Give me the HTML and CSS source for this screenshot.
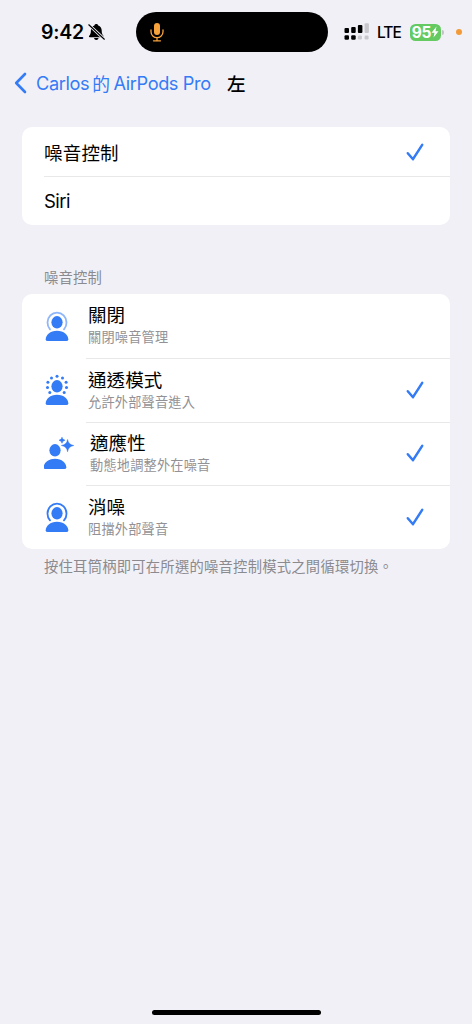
FILE: index.html
```html
<!DOCTYPE html>
<html lang="zh-Hant">
<head>
<meta charset="utf-8">
<meta name="viewport" content="width=device-width, initial-scale=1">
<title>左</title>
<link rel="stylesheet" href="styles.css">
</head>
<body>
<svg class="defs" width="0" height="0" aria-hidden="true">
  <symbol id="check" viewBox="0 0 18 18"><path d="M1.8 10.2 7 16.200 16.200 1.800" fill="none" stroke="currentColor" stroke-width="2.500" stroke-linecap="round" stroke-linejoin="round"/></symbol>
  <symbol id="person" viewBox="0 0 30 34">
    <ellipse cx="13" cy="14.3" rx="5.600" ry="6.200"/>
    <path d="M1.700 31.200C1.700 27 6.200 22.700 13 22.700s11.300 4.300 11.300 8.500q0 1.900-2 1.900H3.700q-2 0-2-1.900Z"/>
  </symbol>
  <symbol id="arc" viewBox="0 0 30 34"><path d="M6 21.400A9.500 10 0 1 1 20 21.400" fill="none" stroke="currentColor" stroke-width="1.800" stroke-linecap="round"/></symbol>
</svg>
<header class="status">
  <div class="time">9:42</div>
  <svg class="bell" viewBox="0 0 17 18"><path d="M8.300 1c1 0 1.700.6 1.900 1.400 2.400.8 3.500 2.600 3.500 5.200 0 3 .7 4.200 1.700 5.200.5.600.3 1.400-.6 1.400H1.800c-.9 0-1.100-.8-.6-1.400 1-1 1.700-2.200 1.700-5.200 0-2.600 1.100-4.400 3.500-5.200C6.600 1.600 7.300 1 8.300 1ZM6 15h4.600c-.3 1.300-1.100 2-2.300 2S6.300 16.300 6 15Z"/><path d="m.8 1.800 15.500 14.400" stroke="#f1f0f6" stroke-width="3"/><path d="m.8 1.800 15.500 14.400" stroke="#000" stroke-width="1.200" stroke-linecap="round"/></svg>
  <div class="island">
    <svg class="mic" viewBox="0 0 14 20"><rect x="4" y="1" width="6" height="12" rx="3" fill="#f7a23b"/><path d="M1 8v1.700a6 6 0 0 0 12 0V8M7 15.800v3M3.500 18.800h7" fill="none" stroke="#f7a23b" stroke-width="1.300" stroke-linecap="round"/></svg>
  </div>
  <svg class="signal" viewBox="0 0 26 18"><rect x=".5" y="5" width="4.500" height="5" rx="1"/><rect x="7.200" y="4" width="4.500" height="6" rx="1"/><rect x="13.900" y="2" width="4.500" height="8" rx="1"/><rect x=".5" y="12.300" width="4.500" height="4.500" rx="1.200"/><rect x="7.200" y="12.300" width="4.500" height="4.500" rx="1.200"/><g fill="#c8c7cc"><rect x="20.600" y=".2" width="4.300" height="9.800" rx="1"/><rect x="13.900" y="12.500" width="4" height="4" rx="1.200"/><rect x="20.600" y="12.500" width="4" height="4" rx="1.200"/></g></svg>
  <div class="lte">LTE</div>
  <div class="battery"><span>95</span><svg class="bolt" viewBox="0 0 8 12"><path d="M5.500.5.500 6.800h3L2.500 11.500 7.500 5.200h-3Z"/></svg></div>
  <div class="nub"></div>
  <div class="dot"></div>
</header>
<nav class="nav">
  <svg class="chevron" viewBox="0 0 13 22"><path d="M11 2 2.200 11 11 20" fill="none" stroke="currentColor" stroke-width="2.600" stroke-linecap="round" stroke-linejoin="round"/></svg>
  <a class="back"><span>Carlos</span><span class="de">的</span><span>AirPods Pro</span></a>
  <h1 class="title">左</h1>
</nav>
<main>
  <section class="card">
    <div class="row"><span class="label">噪音控制</span><svg class="check"><use href="#check"/></svg></div>
    <div class="row"><span class="label latin">Siri</span></div>
  </section>
  <h2 class="heading">噪音控制</h2>
  <section class="card modes">
    <div class="mode">
      <svg class="icon" viewBox="0 0 30 34"><use href="#person"/><use href="#arc" class="faded"/></svg>
      <div class="body"><div><div class="name">關閉</div><div class="sub">關閉噪音管理</div></div></div>
    </div>
    <div class="mode">
      <svg class="icon" viewBox="0 0 30 34"><use href="#person"/><circle cx="13" cy="4.300" r="1.500"/><circle cx="7.500" cy="6" r="1.500"/><circle cx="18.500" cy="6" r="1.500"/><circle cx="3.900" cy="10.300" r="1.500"/><circle cx="22.100" cy="10.300" r="1.500"/><circle cx="3.500" cy="15.600" r="1.500"/><circle cx="22.500" cy="15.600" r="1.500"/><circle cx="5.800" cy="20.600" r="1.500"/><circle cx="20.200" cy="20.600" r="1.500"/></svg>
      <div class="body"><div><div class="name">通透模式</div><div class="sub">允許外部聲音進入</div></div><svg class="check"><use href="#check"/></svg></div>
    </div>
    <div class="mode adaptive">
      <svg class="icon" viewBox="0 0 30 34"><use href="#person" x="-2" width="30" height="34"/><path d="M23.600 3.500q.8 5.200 6.200 6-5.400.8-6.200 6.300-.8-5.500-6.200-6.300 5.400-.8 6.200-6ZM18 1.200q.4 2.600 3 3-2.600.4-3 3.100-.4-2.700-3-3.100 2.600-.4 3-3Z" stroke="currentColor" stroke-width=".5"/></svg>
      <div class="body"><div><div class="name">適應性</div><div class="sub">動態地調整外在噪音</div></div><svg class="check"><use href="#check"/></svg></div>
    </div>
    <div class="mode">
      <svg class="icon" viewBox="0 0 30 34"><use href="#person"/><use href="#arc"/></svg>
      <div class="body"><div><div class="name">消噪</div><div class="sub">阻擋外部聲音</div></div><svg class="check"><use href="#check"/></svg></div>
    </div>
  </section>
  <p class="footer">按住耳筒柄即可在所選的噪音控制模式之間循環切換。</p>
</main>
<div class="home"></div>
</body>
</html>
```
FILE: styles.css
```css
* { box-sizing: border-box; }
body {
  margin: 0;
  height: 1024px;
  display: flex;
  flex-direction: column;
  overflow: hidden;
  background: #f1f0f6;
  color: #000;
  font-family: Inter, "Noto Sans CJK TC", sans-serif;
}
svg { display: block; flex: none; }
.defs { position: absolute; }
.status { height: 65px; display: flex; align-items: center; padding: 0 0 1px 41px; flex: none; }
.time { width: 47px; font-size: 19.500px; font-weight: 600; letter-spacing: -.2px; white-space: nowrap; }
.bell { width: 17px; height: 18px; }
.island { width: 192px; height: 40px; margin-left: 31px; border-radius: 20px; background: #000; display: flex; align-items: center; padding-left: 14px; }
.mic { width: 14px; height: 20px; }
.signal { width: 26px; height: 18px; margin-left: 16px; }
.lte { width: 25px; margin-left: 7px; font-size: 15.500px; font-weight: 500; letter-spacing: -1px; }
.battery { width: 31px; height: 17px; margin-left: 8px; border-radius: 5.500px; background: #64ca61; color: #fff; display: flex; align-items: center; justify-content: center; font-size: 15.500px; font-weight: 700; letter-spacing: -.3px; }
.bolt { width: 8px; height: 12px; fill: #fff; }
.nub { width: 2px; height: 5px; margin-left: 1px; border-radius: 0 2px 2px 0; background: #c4c4c8; }
.dot { width: 6px; height: 6px; margin-left: 12px; border-radius: 50%; background: #f29a37; }
.nav { height: 36px; display: flex; align-items: center; padding-left: 14px; flex: none; color: #347bf6; }
.chevron { width: 13px; height: 22px; }
.back { display: flex; align-items: center; width: 176px; margin-left: 9px; font-size: 18.200px; letter-spacing: -.4px; white-space: nowrap; }
.de { margin: 0 4px 0 3px; font-size: 17.800px; }
.title { margin: 0 0 0 15px; color: #000; font-size: 18.500px; font-weight: 500; }
.card { margin: 26px 22px 0; border-radius: 10px; background: #fff; overflow: hidden; }
.row { height: 49px; margin-left: 22px; padding-right: 26px; display: flex; align-items: center; justify-content: space-between; }
.row + .row { border-top: 1px solid #e8e8eb; }
.label { font-size: 18.500px; letter-spacing: .2px; }
.latin { letter-spacing: -.5px; }
.check { width: 18px; height: 18px; color: #347bf6; }
.heading { margin: 43px 0 0 44px; height: 20px; line-height: 20px; font-size: 14.300px; letter-spacing: .2px; font-weight: 400; color: #8a8a8f; }
.modes { margin-top: 6px; }
.mode { height: 63.750px; display: flex; padding-left: 22px; }
.icon { width: 30px; height: 34px; margin-top: 14px; fill: currentColor; color: #347bf6; }
.faded { opacity: .55; }
.body { flex: 1; margin-left: 12px; padding: 0 26px 1px 2px; display: flex; align-items: center; justify-content: space-between; }
.mode + .mode .body { border-top: 1px solid #e8e8eb; }
.adaptive .body { padding-left: 4px; }
.name { height: 24px; line-height: 24px; font-size: 18.500px; letter-spacing: .1px; }
.sub { height: 20px; line-height: 20px; font-size: 13.200px; letter-spacing: .2px; color: #929296; }
.footer { margin: 7px 0 0 44px; line-height: 22px; font-size: 14.300px; letter-spacing: .25px; color: #8a8a8f; white-space: nowrap; }
.home { width: 169px; height: 5px; margin: auto auto 9px 152px; border-radius: 3px; background: #000; flex: none; }
```
